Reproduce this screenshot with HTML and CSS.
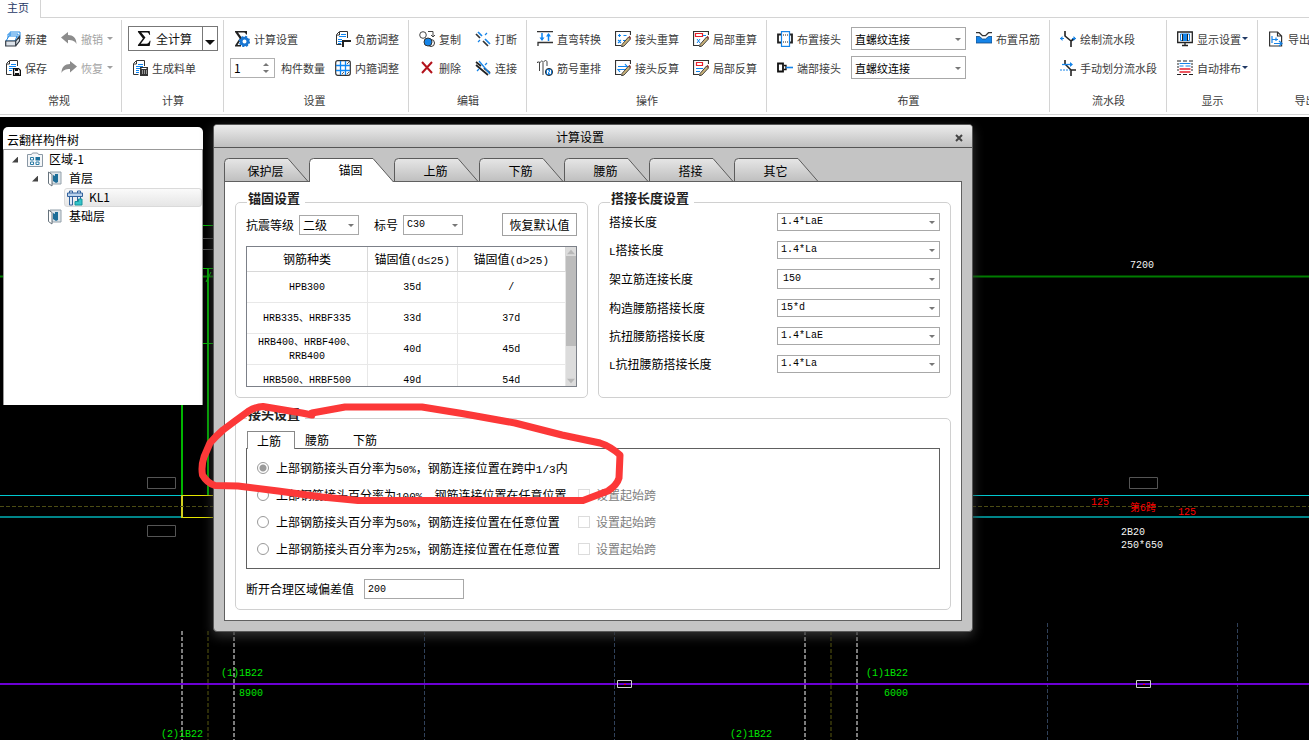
FILE: index.html
```html
<!DOCTYPE html>
<html lang="zh-CN">
<head>
<meta charset="utf-8">
<title>云翻样</title>
<link rel="stylesheet" href="styles.css">
</head>
<body>
<svg class="sprite" aria-hidden="true">
  <symbol id="i-new" viewBox="0 0 16 16"><path d="M5 5V1h10v7M3 7V3h10v6" fill="#fff" stroke="#1e88e5"/><path d="M1 10l3-5h8l-2 5z" fill="#fff" stroke="#1e88e5"/><path d="M.7 10h10v5H.7zM10.700 10L14.500 5.500v4.500l-3.800 5" fill="#dde3ea" stroke="#333b45" stroke-width="1.200"/></symbol>
  <symbol id="i-save" viewBox="0 0 16 16"><path d="M12.500 6V.5h-8l-3 3v11h5M4.500 1v3H2" fill="none" stroke="#333"/><path d="M6 4.500h5M4 6.500h7M4 8.500h4M4 10.500h3" stroke="#0d85f2"/><path d="M8.600 8.600h5l1.800 1.800v5H8.600z" fill="#fff" stroke="#111" stroke-width="1.300"/><path d="M10 9h3v2h-3zM10 13h4v2h-4z" fill="#111"/></symbol>
  <symbol id="i-undo" viewBox="0 0 16 16"><path d="M0 6.500L7 1v3c5 0 8.500 3 8.500 9-1.500-3-4-4-8.500-4v3.500z" fill="#8c8c8c"/></symbol>
  <symbol id="i-redo" viewBox="0 0 16 16"><path d="M16 6.500L9 1v3C4 4 .5 7 .5 13 2 10 4.500 9 9 9v3.500z" fill="#8c8c8c"/></symbol>
  <symbol id="i-sigma" viewBox="0 0 16 16"><path d="M1 0h12.500l.5 4h-1c-.4-2-1-2.500-3-2.500H4.500L9 7l-5 6.500h6c2 0 3-1 3.500-3h1L13.500 16H1v-1l5.300-7L1 1z" fill="#111"/></symbol>
  <symbol id="i-siggear" viewBox="0 0 16 16"><path d="M1 0h12v3.500h-1C11.500 2 11 1.500 9 1.500H4L8 7l-4.500 7H7v1.500H1v-1l4.600-7L1 1z" fill="#222"/><circle cx="10.500" cy="10.500" r="3.400" fill="none" stroke="#1976d2" stroke-width="2.800"/><circle cx="10.500" cy="10.500" r="4.900" fill="none" stroke="#1976d2" stroke-width="1.600" stroke-dasharray="2 1.850"/></symbol>
  <symbol id="i-list" viewBox="0 0 16 16"><path d="M12.500 6V.5h-8l-3 3v11h5M4.500 1v3H2" fill="none" stroke="#333"/><path d="M6 4.500h5M4 6.500h7M4 8.500h4M4 10.500h3M4 12.500h3" stroke="#0d85f2"/><path d="M8 7h8v9H8z" fill="#333"/><path d="M9.500 8.500h5M10 11h1m1 0h1m1 0h1M10 13h1m1 0h1m1 0h1" stroke="#fff"/></symbol>
  <symbol id="i-neg" viewBox="0 0 16 16"><path d="M12.500 7V.5h-8l-3 3v10h5M4.500 1v3H2" fill="none" stroke="#333"/><path d="M6 3.500h5M4 5.500h7M3 8.500h4M3 10.500h4M3 12.500h3" stroke="#0d85f2"/><path d="M16 10H8v6" fill="none" stroke="#222" stroke-width="2"/></symbol>
  <symbol id="i-grid" viewBox="0 0 16 16"><rect x=".7" y=".7" width="14.600" height="14.600" rx="2" fill="#fff" stroke="#333" stroke-width="1.200"/><path d="M5.500 1v14M10.500 1v14M1 5.500h14M1 10.500h14" stroke="#0d85f2" stroke-width="1.300"/><path d="M12 4l3-3M12 14l2-2M7 14l2-2" stroke="#333" stroke-width=".8"/></symbol>
  <symbol id="i-copy" viewBox="0 0 16 16"><circle cx="4" cy="4" r="3.300" fill="#fff" stroke="#444"/><path d="M9 .5h5v5M12 4l2 2 2-2" fill="none" stroke="#444"/><circle cx="12" cy="12" r="3.500" fill="#fff" stroke="#333"/><circle cx="9" cy="11" r="4" fill="#1684e8" stroke="#333"/></symbol>
  <symbol id="i-del" viewBox="0 0 16 16"><path d="M3 2l10 11M13 2L3 13" stroke="#b3121b" stroke-width="2"/></symbol>
  <symbol id="i-break" viewBox="0 0 16 16"><path d="M1 3l4 4M8 10l5 5" stroke="#333" stroke-width="1.700"/><path d="M3 1l4 4M10 8l5 5" stroke="#1684e8" stroke-width="1.700"/><path d="M3 11l2-2M10 4l2-2" stroke="#1684e8" stroke-width="1.200"/></symbol>
  <symbol id="i-link" viewBox="0 0 16 16"><path d="M1 2l5 4M9 8l6 5M1 5l12 10" stroke="#222" stroke-width="1.700"/><path d="M4 1l11 13M2 11l2-2M10 5l2-2" stroke="#1684e8" stroke-width="1.300"/></symbol>
  <symbol id="i-bend" viewBox="0 0 16 16"><path d="M0 .7h16M1 15v-3.500h15" fill="none" stroke="#333" stroke-width="1.300"/><path d="M5 2v7M11.500 10V3" stroke="#0d85f2" stroke-width="1.500"/><path d="M2.500 6.500h5L5 10zM9 5.500h5L11.500 2z" fill="#0d85f2"/></symbol>
  <symbol id="i-num" viewBox="0 0 16 16"><path d="M.5 3V2h2v9M3.500 2.500c0-2 2.500-2 2.500 0V15M7 2c0-2 3-2 3 0v4" fill="none" stroke="#444"/><circle cx="12" cy="12" r="3.600" fill="#1684e8" stroke="#333"/><path d="M10.500 14v-4l3 4v-4" fill="none" stroke="#fff"/></symbol>
  <symbol id="i-pen" viewBox="0 0 16 16"><path d="M7 13.500L13.500 6l2 2L9 15l-2.500.8z" fill="#c9b27a" stroke="#333" stroke-width=".9"/><path d="M13.500 6l1-1.200 1.500 1.600V8z" fill="#8a2b2b"/></symbol>
  <symbol id="i-calc" viewBox="0 0 16 16"><path d="M15.500 4V.5H.5v14H6" fill="none" stroke="#333" stroke-width="1.200"/><path d="M3 4.500h3M4.500 3v3M8.500 4.500h3M3 9l3 3M6 9l-3 3M8 9.500h2" stroke="#0d85f2" stroke-width="1.100"/><use href="#i-pen"/></symbol>
  <symbol id="i-calcr" viewBox="0 0 16 16"><path d="M15.500 4V.5H.5v14H6" fill="none" stroke="#333" stroke-width="1.200"/><path d="M3 6.500h9l-2-2.500M12 9.500H3l2 2.500" fill="none" stroke="#0d85f2" stroke-width="1.200"/><use href="#i-pen"/></symbol>
  <symbol id="i-loc" viewBox="0 0 16 16"><path d="M15.500 4V.5H.5v14H6" fill="none" stroke="#333" stroke-width="1.200"/><path d="M2.500 2.500h7v3h-7z" fill="none" stroke="#e8202c" stroke-width="1.200"/><path d="M4 8l3 4M7 8l-3 4M10 4.500h3" stroke="#0d85f2"/><use href="#i-pen"/></symbol>
  <symbol id="i-locr" viewBox="0 0 16 16"><path d="M15.500 4V.5H.5v14H6" fill="none" stroke="#333" stroke-width="1.200"/><path d="M3.500 2.500h6v3h-6z" fill="none" stroke="#e8202c" stroke-width="1.200"/><path d="M3 8.500h7M3 11.500h4" stroke="#0d85f2"/><use href="#i-pen"/></symbol>
  <symbol id="i-joint" viewBox="0 0 16 16"><path d="M4 3.500H1v8h3M12 3.500h3v8h-3" fill="none" stroke="#222" stroke-width="1.800"/><path d="M4 4h8M4 11h8" stroke="#222" stroke-dasharray="1 1"/><rect x="4.500" y=".6" width="8" height="14.800" fill="none" stroke="#1684e8" stroke-width="1.200"/></symbol>
  <symbol id="i-end" viewBox="0 0 16 16"><path d="M1 3.500h5v8H1z" fill="#fff" stroke="#111" stroke-width="1.800"/><path d="M7 5.500h2v4H7" fill="none" stroke="#111" stroke-width="1.300"/><path d="M9 7.500h7" stroke="#1684e8" stroke-width="1.600"/></symbol>
  <symbol id="i-hang" viewBox="0 0 16 16"><path d="M0 5.500h3.500l3 2.500h3l3-2.500H16V12H0z" fill="#1684e8" stroke="#124a80" stroke-width=".8"/><path d="M0 1.700h3.500l3 3h3l3-3H16" fill="none" stroke="#333" stroke-width="1.300"/></symbol>
  <symbol id="i-flow" viewBox="0 0 16 16"><path d="M5 0v5l6 5v6M11 10l4-3" fill="none" stroke="#222" stroke-width="1.600"/><path d="M0 7.500h4M12 7.500h4" stroke="#1684e8" stroke-width="1.200"/><path d="M2.500 5L0 7.500 2.500 10zM13.500 5L16 7.500 13.500 10z" fill="#1684e8"/></symbol>
  <symbol id="i-split" viewBox="0 0 16 16"><path d="M5 0v4l6 6v6M11 10h5" fill="none" stroke="#222" stroke-width="1.600"/><path d="M2 4.500h10" stroke="#1684e8" stroke-width="1.300"/><path d="M10 2l3 2.500L10 7z" fill="#1684e8"/><path d="M0 10h10" stroke="#1684e8" stroke-dasharray="2 1"/></symbol>
  <symbol id="i-disp" viewBox="0 0 16 16"><path d="M.7 1h14.600v10.500H.7zM5 14.500h6M8 12v2" fill="#fff" stroke="#222" stroke-width="1.300"/><path d="M3.500 3h9v6.500h-9z" fill="none" stroke="#1684e8"/><path d="M5 3h6v6.500H5z" fill="#1684e8"/><path d="M5.500 3v7M10.500 3v7" stroke="#222"/></symbol>
  <symbol id="i-auto" viewBox="0 0 16 16"><path d="M0 1h16M0 14.500h16" stroke="#222" stroke-width="1.200" stroke-dasharray="4 2"/><path d="M1 3v9M15 3v9" stroke="#222" stroke-dasharray="2 1"/><path d="M2.500 3.500h11M2.500 6h4m2 0h5" stroke="#1684e8" stroke-width="1.200"/><path d="M2.500 9h11M2.500 12h11" stroke="#e8202c" stroke-width="1.300"/></symbol>
  <symbol id="i-export" viewBox="0 0 16 16"><path d="M1.600 1h8l4 4v10h-12zM9.500 1v4h4" fill="#fff" stroke="#333" stroke-width="1.200"/><path d="M4 5v7M4 8.500h6M8 6.500V10M6 12.500h7M11 10l3 2.500-3 2.500" fill="none" stroke="#1684e8" stroke-width="1.200"/></symbol>
  <symbol id="t-zone" viewBox="0 0 16 16"><path d="M.5 2.500h4l1-1.500h5l1 1.500h4v12H.5z" fill="#f4f6f8" stroke="#8a98a5"/><path d="M3.500 5.500h3v2.500h-3zM3.500 10h3v2.500h-3zM9 10h3v2.500H9z" fill="#fff" stroke="#2a7ba5"/><path d="M8.500 5H13v3.500H8.500z" fill="#1a6f9c"/></symbol>
  <symbol id="t-floor" viewBox="0 0 16 16"><path d="M3 1h11v12H5z" fill="#dfe5ea" stroke="#93a0aa"/><path d="M6 4l2 1V3h3v8l-2 1-3-2z" fill="#1d6d98"/><path d="M1.500 1L5 3.500V15l-3.500-2.500z" fill="#fff" stroke="#66727c"/></symbol>
  <symbol id="t-beam" viewBox="0 0 16 16"><path d="M2.500 1h3v14h-3zM10.500 1h3v10h-3z" fill="#e3ecf7" stroke="#33629d"/><path d="M.5 3h15v3.500H.5z" fill="#bcd3ec" stroke="#33629d"/><path d="M8 11.500h3.500V9H15v6H8z" fill="#35c4c9" stroke="#17959c"/></symbol>
  <symbol id="tab-shape" viewBox="0 0 85 24"><path d="M.5 24V4.500q0-4 4-4H64L84.500 24"/></symbol>
  <linearGradient id="tabgrad" x1="0" y1="0" x2="0" y2="1"><stop offset="0" stop-color="#e6e6e6"/><stop offset="1" stop-color="#bebebe"/></linearGradient>
</svg>

<header class="ribbon">
  <nav class="ribbon-tabs"><a class="ribbon-tab" href="#home">主页</a></nav>
  <div class="ribbon-body">
    <section class="group tight-left">
      <div class="cols">
        <div class="col"><button class="cmd"><svg><use href="#i-new"/></svg>新建</button><button class="cmd"><svg><use href="#i-save"/></svg>保存</button></div>
        <div class="col"><button class="cmd" disabled><svg><use href="#i-undo"/></svg>撤销<i class="caret"></i></button><button class="cmd" disabled><svg><use href="#i-redo"/></svg>恢复<i class="caret"></i></button></div>
      </div>
      <h2>常规</h2>
    </section>
    <section class="group tight">
      <div class="cols"><div class="col">
        <div class="split"><button class="split-main"><svg><use href="#i-sigma"/></svg>全计算</button><button class="split-drop" aria-label="更多计算"><i class="caret big"></i></button></div>
        <button class="cmd indent"><svg><use href="#i-list"/></svg>生成料单</button>
      </div></div>
      <h2>计算</h2>
    </section>
    <section class="group tight">
      <div class="cols near">
        <div class="col">
          <button class="cmd"><svg><use href="#i-siggear"/></svg>计算设置</button>
          <label class="count"><span class="spin"><input type="text" value="1"><i class="up"></i><i class="down"></i></span>构件数量</label>
        </div>
        <div class="col"><button class="cmd"><svg><use href="#i-neg"/></svg>负筋调整</button><button class="cmd"><svg><use href="#i-grid"/></svg>内箍调整</button></div>
      </div>
      <h2>设置</h2>
    </section>
    <section class="group">
      <div class="cols">
        <div class="col"><button class="cmd"><svg><use href="#i-copy"/></svg>复制</button><button class="cmd"><svg><use href="#i-del"/></svg>删除</button></div>
        <div class="col"><button class="cmd"><svg><use href="#i-break"/></svg>打断</button><button class="cmd"><svg><use href="#i-link"/></svg>连接</button></div>
      </div>
      <h2>编辑</h2>
    </section>
    <section class="group">
      <div class="cols">
        <div class="col"><button class="cmd"><svg><use href="#i-bend"/></svg>直弯转换</button><button class="cmd"><svg><use href="#i-num"/></svg>筋号重排</button></div>
        <div class="col"><button class="cmd"><svg><use href="#i-calc"/></svg>接头重算</button><button class="cmd"><svg><use href="#i-calcr"/></svg>接头反算</button></div>
        <div class="col"><button class="cmd"><svg><use href="#i-loc"/></svg>局部重算</button><button class="cmd"><svg><use href="#i-locr"/></svg>局部反算</button></div>
      </div>
      <h2>操作</h2>
    </section>
    <section class="group">
      <div class="cols near">
        <div class="col"><button class="cmd"><svg><use href="#i-joint"/></svg>布置接头</button><button class="cmd"><svg><use href="#i-end"/></svg>端部接头</button></div>
        <div class="col">
          <span class="combo ribbon-combo"><select aria-label="布置接头"><option>直螺纹连接</option></select></span>
          <span class="combo ribbon-combo"><select aria-label="端部接头"><option>直螺纹连接</option></select></span>
        </div>
        <div class="col"><button class="cmd"><svg><use href="#i-hang"/></svg>布置吊筋</button></div>
      </div>
      <h2>布置</h2>
    </section>
    <section class="group">
      <div class="cols"><div class="col"><button class="cmd"><svg><use href="#i-flow"/></svg>绘制流水段</button><button class="cmd"><svg><use href="#i-split"/></svg>手动划分流水段</button></div></div>
      <h2>流水段</h2>
    </section>
    <section class="group">
      <div class="cols"><div class="col"><button class="cmd"><svg><use href="#i-disp"/></svg>显示设置<i class="caret navy"></i></button><button class="cmd"><svg><use href="#i-auto"/></svg>自动排布<i class="caret navy"></i></button></div></div>
      <h2>显示</h2>
    </section>
    <section class="group">
      <div class="cols"><div class="col"><button class="cmd"><svg><use href="#i-export"/></svg>导出工程量</button></div></div>
      <h2>导出</h2>
    </section>
  </div>
</header>

<main class="stage">
  <svg class="cad" viewBox="0 117 1309 623" width="1309" height="623">
    <g fill="none">
      <path d="M0 276.500H3000" stroke="#007c00" stroke-width="2"/>
      <path d="M182 300V495M208 268V495" stroke="#00b400" stroke-width="2"/>
      <path d="M203 225.500H214M203 268.500H214M203 343.500H214M206 282l5-10" stroke="#00c000"/>
      <path d="M203 238.500H214M203 249.500H214" stroke="#505050"/>
      <path d="M0 495.500H182M900 495.500H3000" stroke="#00c8d0"/>
      <path d="M0 517H182M900 517H3000" stroke="#008488" stroke-width="2"/>
      <path d="M183 495.500H214M183 517.500H214" stroke="#e6e600"/>
      <path d="M182 495V518" stroke="#d0d020" stroke-width="2"/>
      <path d="M0 506.500H3000" stroke="#4c4c14" stroke-dasharray="4 2"/>
      <path d="M147.500 477.500h28v11h-28zM147.500 525.500h28v11h-28zM1129.500 477.500h28v11h-28z" stroke="#555"/>
      <g stroke-dasharray="4 2">
        <path d="M182 631V1400M234 631V1400M805 631V1400M857 631V1400" stroke="#7c7c7c" stroke-width="2"/>
        <path d="M208 631V1400M831 631V1400" stroke="#2c2c08" stroke-width="2"/>
        <path d="M424.500 631V1400M614.500 631V1400M1047.500 623V1400M1237.500 623V1400" stroke="#30415a"/>
      </g>
      <path d="M0 684H3000" stroke="#6c00d4" stroke-width="2"/>
      <path d="M617.500 680.500h14v7h-14zM1136.500 680.500h14v7h-14z" stroke="#d0d0d0"/>
      <path d="M624 684.500h2M1143 684.500h2" stroke="#f00"/>
    </g>
    <g class="note white"><text x="1130" y="268">7200</text><text x="1121" y="535">2B20</text><text x="1121" y="548">250*650</text></g>
    <g class="note red"><text x="1091" y="505">125</text><text x="1130" y="511">第6跨</text><text x="1178" y="515">125</text></g>
    <g class="note green"><text x="221" y="676">(1)1B22</text><text x="239" y="696">8900</text><text x="161" y="737">(2)1B22</text><text x="866" y="676">(1)1B22</text><text x="884" y="696">6000</text><text x="730" y="737">(2)1B22</text></g>
  </svg>

  <aside class="tree-window">
    <h2>云翻样构件树</h2>
    <ul class="tree">
      <li class="lv1"><i class="fold"></i><svg><use href="#t-zone"/></svg><span>区域-1</span></li>
      <li class="lv2"><i class="fold"></i><svg><use href="#t-floor"/></svg><span>首层</span></li>
      <li class="lv3 selected"><svg><use href="#t-beam"/></svg><span>KL1</span></li>
      <li class="lv2"><i class="fold none"></i><svg><use href="#t-floor"/></svg><span>基础层</span></li>
    </ul>
  </aside>

  <section class="dialog" role="dialog" aria-labelledby="dlg-title">
    <div class="titlebar"><h1 id="dlg-title">计算设置</h1><button class="close" aria-label="关闭"><svg viewBox="0 0 8 8"><path d="M1 1l6 6M7 1L1 7" stroke="#444" stroke-width="2"/></svg></button></div>
    <div class="dialog-body">
      <div class="tabs" role="tablist">
        <button role="tab"><svg><use href="#tab-shape"/></svg><span>保护层</span></button>
        <button role="tab" class="active" aria-selected="true"><svg><use href="#tab-shape"/></svg><span>锚固</span></button>
        <button role="tab"><svg><use href="#tab-shape"/></svg><span>上筋</span></button>
        <button role="tab"><svg><use href="#tab-shape"/></svg><span>下筋</span></button>
        <button role="tab"><svg><use href="#tab-shape"/></svg><span>腰筋</span></button>
        <button role="tab"><svg><use href="#tab-shape"/></svg><span>搭接</span></button>
        <button role="tab"><svg><use href="#tab-shape"/></svg><span>其它</span></button>
      </div>
      <div class="panel">
        <fieldset>
          <legend>锚固设置</legend>
          <div class="anchor-row">
            <label for="grade">抗震等级</label><span class="combo short"><select id="grade"><option>二级</option></select></span>
            <label for="mark" class="second">标号</label><span class="combo short mono"><select id="mark"><option>C30</option></select></span>
            <button class="reset">恢复默认值</button>
          </div>
          <div class="table-frame">
            <div class="table-clip">
              <table>
                <colgroup><col class="c1"><col class="c2"><col class="c3"></colgroup>
                <thead><tr><th>钢筋种类</th><th>锚固值<span class="latin">(d≤25)</span></th><th>锚固值<span class="latin">(d&gt;25)</span></th></tr></thead>
                <tbody class="mono">
                  <tr><td>HPB300</td><td>35d</td><td>/</td></tr>
                  <tr><td>HRB335、HRBF335</td><td>33d</td><td>37d</td></tr>
                  <tr><td>HRB400、HRBF400、<br>RRB400</td><td>40d</td><td>45d</td></tr>
                  <tr><td>HRB500、HRBF500</td><td>49d</td><td>54d</td></tr>
                </tbody>
              </table>
            </div>
            <div class="scroll"><i class="s-up"></i><i class="thumb"></i><i class="s-down"></i></div>
          </div>
        </fieldset>
        <fieldset class="lap">
          <legend>搭接长度设置</legend>
          <div class="lap-row"><label for="l1">搭接长度</label><span class="combo mono"><select id="l1"><option>1.4*LaE</option></select></span></div>
          <div class="lap-row"><label for="l2"><span class="latin">L</span>搭接长度</label><span class="combo mono"><select id="l2"><option>1.4*La</option></select></span></div>
          <div class="lap-row tall"><label for="l3">架立筋连接长度</label><span class="combo mono"><select id="l3"><option>150</option></select></span></div>
          <div class="lap-row"><label for="l4">构造腰筋搭接长度</label><span class="combo mono"><select id="l4"><option>15*d</option></select></span></div>
          <div class="lap-row"><label for="l5">抗扭腰筋搭接长度</label><span class="combo mono"><select id="l5"><option>1.4*LaE</option></select></span></div>
          <div class="lap-row"><label for="l6"><span class="latin">L</span>抗扭腰筋搭接长度</label><span class="combo mono"><select id="l6"><option>1.4*La</option></select></span></div>
        </fieldset>
        <fieldset class="joint">
          <legend>接头设置</legend>
          <div class="subtabs" role="tablist"><button role="tab" class="active" aria-selected="true">上筋</button><button role="tab">腰筋</button><button role="tab">下筋</button></div>
          <div class="options">
            <div class="option"><label><input type="radio" name="joint" checked><span>上部钢筋接头百分率为<span class="latin">50%</span>，钢筋连接位置在跨中<span class="latin">1/3</span>内</span></label></div>
            <div class="option"><label><input type="radio" name="joint"><span>上部钢筋接头百分率为<span class="latin">100%</span>，钢筋连接位置在任意位置</span></label><label class="off"><input type="checkbox" disabled>设置起始跨</label></div>
            <div class="option"><label><input type="radio" name="joint"><span>上部钢筋接头百分率为<span class="latin">50%</span>，钢筋连接位置在任意位置</span></label><label class="off"><input type="checkbox" disabled>设置起始跨</label></div>
            <div class="option"><label><input type="radio" name="joint"><span>上部钢筋接头百分率为<span class="latin">25%</span>，钢筋连接位置在任意位置</span></label><label class="off"><input type="checkbox" disabled>设置起始跨</label></div>
          </div>
          <div class="offset-row"><label for="dev">断开合理区域偏差值</label><input id="dev" class="mono" type="text" value="200"></div>
        </fieldset>
      </div>
    </div>
  </section>

  <svg class="markup" viewBox="0 117 1309 623" width="1309" height="623" aria-hidden="true">
    <path d="M312 415L302 413 278 409 263 406.500Q255 407 248 411.500L235 421 223 430Q215 437 210 443L204 457Q201 466 202.500 475 207 483 215 485.500L238 486 278 491 322 497 358 500.500H583L608 491Q617 485 619 478L620 455Q610 446 600 443L562 435 515 423 462 413.500 422 407H345L312 413"/>
  </svg>
</main>
</body>
</html>
```
FILE: styles.css
```css
* { box-sizing: border-box; }
html, body { height: 100%; }
body {
  margin: 0;
  display: flex;
  flex-direction: column;
  overflow: hidden;
  background: #fff;
  color: #000;
  font: 12px/16px "Noto Sans CJK SC", sans-serif;
}
button, input, select { font: inherit; color: inherit; margin: 0; padding: 0; border: 0; background: none; border-radius: 0; }
h1, h2, ul { margin: 0; padding: 0; font-size: 12px; font-weight: 400; list-style: none; }
.sprite { position: absolute; width: 0; height: 0; }
.mono { font-family: "Liberation Mono", "Noto Sans CJK SC", monospace; font-size: 10px; }
.latin { font-family: "Liberation Mono", "Noto Sans CJK SC", monospace; font-size: 11px; line-height: 1; }

/* ribbon */
.ribbon { flex: none; height: 117px; overflow: hidden; font-size: 11px; color: #3c3c3c; }
.ribbon-tabs { display: flex; height: 18px; }
.ribbon-tabs::after { content: ""; flex: 1; border-bottom: 1px solid #d4d4d4; border-left: 1px solid #d4d4d4; }
.ribbon-tab { width: 40px; padding-left: 7px; line-height: 14px; color: #1f3864; text-decoration: none; }
.ribbon-body { display: flex; height: 97px; border-bottom: 1px solid #d4d4d4; }
.group { flex: none; display: flex; flex-direction: column; justify-content: space-between; margin: 2px 0; padding: 4px 9px 4px 10px; border-right: 1px solid #d4d4d4; }
.group:last-child { border-right: 0; }
.group.tight-left { padding-left: 5px; padding-right: 8px; }
.group.tight { padding-left: 6px; }
.group.tight:nth-child(2) { padding-right: 5px; }
.group h2 { font-size: 11px; text-align: center; }
.cols { display: flex; gap: 14px; }
.cols.near { gap: 10px; }
.col { display: grid; grid-template-rows: 29px 29px; align-items: center; }
.cmd { display: flex; align-items: center; gap: 4px; white-space: nowrap; text-align: left; }
.cmd svg { width: 16px; height: 16px; flex: none; }
.cmd:disabled { color: #a3a3a3; }
.tight .cmd { padding-left: 0; }
.tight .indent { padding-left: 4px; }
.tight .col:first-child .cmd { padding-left: 4px; }
.caret { width: 0; border: solid transparent; border-width: 3px 3px 0; border-top-color: #a0a0a0; }
.caret.navy { border-top-color: #1f3864; margin-left: -3px; }
.caret.big { border-width: 5px 5px 0; border-top-color: #111; margin-top: 8px; }
.split { display: flex; height: 25px; border: 1px solid #777; font-size: 12px; color: #111; }
.split-main { display: flex; align-items: center; gap: 4px; width: 73px; padding-left: 8px; white-space: nowrap; }
.split-main svg { width: 15px; height: 15px; }
.split-drop { display: flex; justify-content: center; align-items: center; width: 15px; border-left: 1px solid #777; }
.count { display: flex; align-items: center; gap: 6px; }
.spin { position: relative; width: 45px; height: 20px; border: 1px solid #b0b0b0; color: #000; font-size: 12px; }
.spin input { width: 28px; height: 18px; padding-left: 3px; display: block; }
.spin i { position: absolute; right: 5px; border: 3px solid transparent; }
.spin .up { top: 1px; border-bottom-color: #777; }
.spin .down { bottom: 1px; border-top-color: #777; }

.combo { position: relative; display: block; height: 18px; border: 1px solid #a8a8a8; background: #fff; color: #000; }
.combo select { display: block; width: 100%; height: 100%; padding: 0 14px 0 3px; appearance: none; outline: 0; }
.combo::after { content: ""; position: absolute; right: 4px; top: 50%; margin-top: -1px; border: solid transparent; border-width: 3px 3px 0; border-top-color: #777; pointer-events: none; }
.ribbon-combo { width: 115px; height: 23px; font-size: 11px; }

/* drawing area */
.stage { position: relative; flex: 1; min-height: 0; overflow: hidden; background: #000; }
.cad, .markup { position: absolute; left: 0; top: 0; overflow: visible; }
.note { font-family: "Liberation Mono", "Noto Sans CJK SC", monospace; font-size: 10px; }
.white { fill: #f4f4f4; }
.red { fill: #f00; }
.green { fill: #00e400; }
.markup { pointer-events: none; }
.markup path { fill: none; stroke: #fc3838; stroke-width: 7; stroke-linejoin: round; stroke-linecap: round; }

/* component tree */
.tree-window { position: absolute; left: 3px; top: 10px; width: 200px; height: 278px; background: #fff; border-radius: 5px 5px 0 0; }
.tree-window h2 { height: 22px; padding: 5px 4px 0; }
.tree { height: 256px; border: 1px solid #999; border-bottom: 0; }
.tree li { display: flex; align-items: center; gap: 6px; height: 19px; }
.tree svg { width: 16px; height: 16px; flex: none; }
.tree span { line-height: 14px; padding-bottom: 2px; }
.lv1 { padding-left: 8px; }
.lv2 { padding-left: 28px; }
.fold { width: 6px; height: 6px; margin-right: 3px; background: #444; clip-path: polygon(100% 0, 100% 100%, 0 100%); }
.fold.none { background: none; }
.tree .lv3 { margin-left: 60px; padding-left: 2px; border: 1px solid #dadada; border-radius: 3px; background: linear-gradient(#fafafa, #e6e6e6); }

/* dialog */
.dialog { position: absolute; left: 213px; top: 7px; width: 760px; border: 1px solid #585858; border-radius: 4px; background: #c4c4c4; box-shadow: 0 4px 12px 0 #333; }
.titlebar { display: flex; height: 23px; border-bottom: 1px solid #555; border-radius: 3px 3px 0 0; background: linear-gradient(#ececec, #bfbfbf); }
.titlebar h1 { flex: 1; text-align: center; line-height: 23px; }
.close { width: 26px; padding-top: 3px; }
.close svg { width: 8px; height: 8px; display: block; margin: auto; }
.dialog-body { padding: 10px; }
.tabs { position: relative; z-index: 1; display: flex; align-items: flex-start; height: 24px; margin-bottom: -1px; overflow: hidden; pointer-events: none; }
.tabs button { position: relative; flex: none; width: 85px; height: 23px; padding: 2px 2px 0 0; overflow: hidden; pointer-events: auto; }
.tabs button.active { height: 24px; padding: 0 2px 1px 0; }
.tabs svg { position: absolute; left: 0; top: 0; width: 85px; height: 24px; fill: url(#tabgrad); stroke: #5c5c5c; }
.tabs .active svg { fill: #fff; }
.tabs span { position: relative; }
.panel { display: grid; grid-template-columns: 1fr 1fr; gap: 10px; padding: 10px; border: 1px solid #606060; background: #fff; }
fieldset { min-width: 0; margin: 0; padding: 1px 10px 10px; border: 1px solid #d0d0d0; border-radius: 5px; }
legend { margin-left: 1px; padding: 0 5px 8px 1px; font-size: 13px; line-height: 12px; font-weight: 700; color: #222; }
.anchor-row { display: flex; align-items: center; height: 23px; margin-bottom: 10px; }
.anchor-row .combo { margin-left: 5px; }
.anchor-row .second { margin-left: 15px; }
.combo.short { width: 60px; height: 20px; }
.reset { width: 75px; height: 23px; margin-left: auto; border: 1px solid #a0a0a0; }
.table-frame { display: flex; height: 141px; border: 1px solid #7c8088; }
.table-clip { flex: 1; overflow: hidden; }
table { width: 100%; table-layout: fixed; border-collapse: separate; border-spacing: 0; }
.c1 { width: 38%; }
.c2 { width: 28%; }
th, td { height: 31px; padding: 0; text-align: center; font-weight: 400; line-height: 14px; border: solid #e8e8e8; border-width: 0 1px 1px 0; }
td { padding-top: 2px; }
th { height: 25px; border-color: #d8d8d8; }
.scroll { flex: none; width: 10px; display: flex; flex-direction: column; align-items: center; background: #dcdcdc; }
.s-up, .s-down { flex: none; width: 10px; height: 9px; background: #b8b8b8; clip-path: polygon(50% 30%, 90% 80%, 10% 80%); }
.s-down { margin-top: auto; clip-path: polygon(10% 20%, 90% 20%, 50% 70%); }
.thumb { width: 10px; height: 90px; background: #bcbcbc; }
.lap-row { display: flex; align-items: center; justify-content: space-between; height: 18px; margin-bottom: 10px; }
.lap-row .combo { width: 163px; }
.lap-row.tall, .lap-row.tall .combo { height: 20px; }
.lap-row.tall select { padding-left: 5px; }
.joint { grid-column: 1 / -1; padding-top: 3px; }
.subtabs { position: relative; display: flex; height: 18px; margin: 0 0 -1px 1px; }
.subtabs button { width: 48px; padding-right: 4px; line-height: 16px; }
.subtabs .active { border: 1px solid #888; border-bottom: 0; background: #fff; }
.options { padding: 5px 0 6px 10px; border: 1px solid #606060; }
.option { display: grid; grid-template-columns: 321px auto; justify-content: start; height: 27px; }
.option label { display: flex; align-items: center; }
.option label > span { white-space: nowrap; }
.option input { appearance: none; flex: none; width: 12px; height: 12px; margin-right: 7px; border: 1px solid #999; border-radius: 50%; }
.option input:checked { background: radial-gradient(circle, #9a9a9a 3px, transparent 4px); }
.option .off { color: #808080; }
.option .off input { border-color: #dcdcdc; border-radius: 0; margin-right: 6px; }
.offset-row { display: flex; align-items: center; gap: 10px; margin-top: 10px; }
.offset-row input { width: 100px; height: 20px; padding: 0 3px; border: 1px solid #a8a8a8; }
```
